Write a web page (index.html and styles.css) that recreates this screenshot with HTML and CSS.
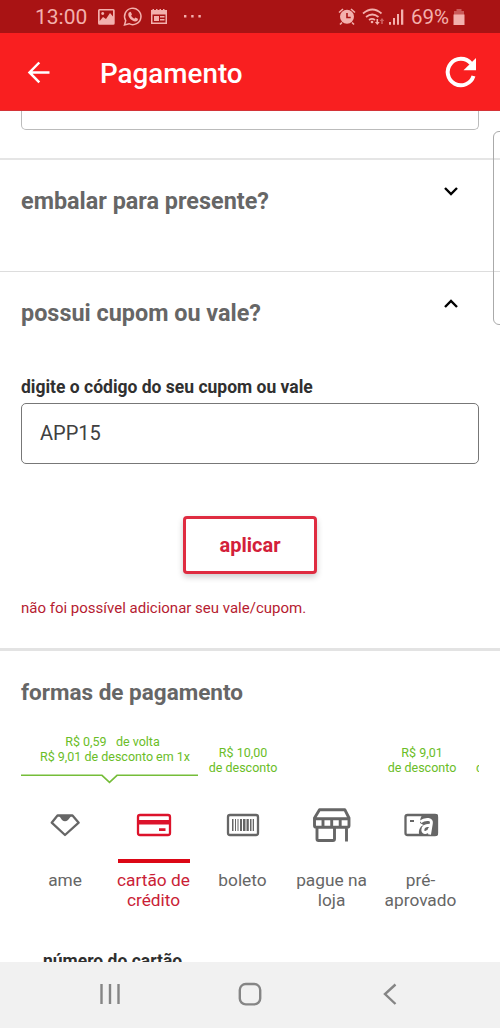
FILE: index.html
```html
<!DOCTYPE html>
<html lang="pt-BR">
<head>
<meta charset="utf-8">
<title>Pagamento</title>
<link rel="stylesheet" href="styles.css">
</head>
<body>
<div class="screen">
  <div class="status">
    <span class="clock">13:00</span>
    <svg class="status-left" width="106" height="22" viewBox="97 6 106 22">
      <path fill="currentColor" fill-rule="evenodd" d="M99.500 9H113.200Q114.700 9 114.700 10.500V23.200Q114.700 24.700 113.200 24.700H99.500Q98 24.700 98 23.200V10.500Q98 9 99.500 9ZM99.700 10.500V21L103 17L106 19L110 13L113 16.500V10.500ZM102.700 12a1.500 1.500 0 1 0 .01 0Z"/>
      <path fill="none" stroke="currentColor" stroke-width="1.500" d="M124.500 25 125.700 20.600A8.200 8.200 0 1 1 129 23.700Z"/>
      <path fill="currentColor" d="M129.500 12.200q1-.8 1.600.2l.8 1.900q0 .7-.8 1.300c.6 1.500 1.600 2.400 3.200 3.100l1.100-1.200 2.500 1.200c.4 1.600-1 2.700-2.600 2.700-3.800-.6-7-4-7-7 0-1 .5-1.800 1.200-2.200Z"/>
      <path fill="currentColor" fill-rule="evenodd" d="M151 10h1.500V9h1.500v1h2V9h1.500v1h2V9h1.500v1h2V9h1.500v1H167v14h-16ZM152.500 14.500v8h13v-8ZM154 16h5v5h-5Zm6 0h4.500v1.500H160Zm0 3h4.500v1.500H160Z"/>
      <path fill="currentColor" d="M184 15h2.400v2.400H184Zm7.200 0h2.400v2.400h-2.400Zm7.200 0h2.400v2.400h-2.400Z"/>
    </svg>
    <svg class="status-right" width="68" height="22" viewBox="337 6 68 22">
      <circle cx="347" cy="16.800" r="7" fill="currentColor"/>
      <path fill="none" stroke="#a91314" stroke-width="1.600" d="M347 13v4.500h3.700"/>
      <path fill="none" stroke="currentColor" stroke-width="1.600" d="M339 12.500l4-3.500M355 12.500 351 9M342 22.500l-2 2M352 22.500l2 2"/>
      <path fill="none" stroke="currentColor" stroke-width="1.700" d="M363 13.500q9.500-8 18.500 0M366 17q6.300-5 12.500 0M369 20q3-2.200 6 0"/>
      <circle cx="372" cy="22" r="1.300" fill="currentColor"/>
      <path fill="currentColor" d="M376.500 19h1.600v3h1.600l-2.400 3-2.400-3h1.600Z"/>
      <path fill="currentColor" opacity=".5" d="m382 18 2.300 3h-1.500v3h-1.600v-3h-1.500Z"/>
      <path fill="currentColor" d="M389 22h2v2.700h-2Zm4-4h2v6.700h-2Zm4-4h2v10.700h-2Zm4-4.500h2.300v15.200H401Z"/>
    </svg>
    <span class="percent">69%</span>
    <svg class="battery" width="12" height="18" viewBox="0 0 12 18"><path fill="currentColor" opacity=".45" d="M3.500 1h5v2H11v4H1V3h2.500Z"/><path fill="currentColor" d="M.5 6.500h11V17H.5Z"/></svg>
  </div>
  <header class="appbar">
    <svg class="back" width="24" height="24" viewBox="0 0 24 24"><path d="M23.500 12.500H3.500M13.300 2.500 3.500 12.500l9.800 9.800"/></svg>
    <h1>Pagamento</h1>
    <svg class="reload" width="34" height="34" viewBox="444 55 34 34"><path class="arc" d="M471 63.500A13.200 13.200 0 1 0 473.500 76"/><path class="tip" d="M476 58v12.300h-12.500Z"/></svg>
  </header>
  <main class="content">
    <div class="field-end"></div>
    <section class="fold gift"><h2>embalar para presente?</h2><svg width="16" height="12" viewBox="0 0 16 12"><path d="m2 3 6 6 6-6"/></svg></section>
    <section class="fold coupon-head"><h2>possui cupom ou vale?</h2><svg width="16" height="12" viewBox="0 0 16 12"><path d="m2 9 6-6 6 6"/></svg></section>
    <section class="coupon">
      <label>digite o código do seu cupom ou vale</label>
      <div class="input">APP15</div>
      <button>aplicar</button>
      <p class="error">não foi possível adicionar seu vale/cupom.</p>
    </section>
    <section class="payment">
      <h2>formas de pagamento</h2>
      <div class="offers">
        <div class="offer first"><span class="cashback">R$ 0,59 &nbsp; de volta</span><br>R$ 9,01 de desconto em 1x</div>
        <div class="offer">R$ 10,00<br>de desconto</div>
        <div class="offer"></div>
        <div class="offer">R$ 9,01<br>de desconto</div>
        <div class="offer next"><br>de desconto</div>
      </div>
      <svg class="pointer" width="177" height="12" viewBox="0 0 177 12"><path d="M0 2.300h81l7.500 7 7.500-7h81"/></svg>
      <div class="methods">
        <div class="method"><svg width="44" height="40" viewBox="0 0 44 40"><path class="line" d="M14.500 10.500h15l6.200 7.200L22 30 8.700 17.700Z"/><path class="solid" d="M15.500 10h13.500l-4 5q-3 2.500-6 0Z"/></svg><i></i><span>ame</span></div>
        <div class="method active"><svg width="44" height="40" viewBox="0 0 44 40"><rect class="line" x="6" y="10" width="32" height="20" rx="2"/><path class="solid" d="M6 15h32v4.500H6Zm21 8.300h6.500v2.700H27Z"/></svg><i></i><span>cartão de crédito</span></div>
        <div class="method"><svg width="44" height="40" viewBox="0 0 44 40"><rect class="line" x="7" y="10" width="30" height="20" rx="2"/><path class="solid" d="M11 14h1.500v12H11Zm3 0h1v12h-1Zm2.500 0h1v12h-1Zm2.500 0h2v12h-2Zm3 0h2.500v12H22Zm3.500 0h2.300v12h-2.300Zm3.500 0h1.500v12H29Zm2.700 0h1.300v12h-1.300Z"/></svg><i></i><span>boleto</span></div>
        <div class="method"><svg width="44" height="40" viewBox="0 0 44 40"><path class="line thick" d="M9.500 4.700h25.300L39 13v7.500q0 1.800-2 1.800H6.500q-2 0-2-1.800V13ZM4.500 13.800H39M13 14v8m8.700-8v8m8.500-8v8M7 22.500V34q0 1.500 1.500 1.500H23q1.500 0 1.500-1.500V22.500M36.500 22.500v14"/></svg><i></i><span>pague na loja</span></div>
        <div class="method"><svg width="44" height="40" viewBox="0 0 44 40"><rect class="line" x="6.500" y="10" width="31.500" height="20" rx="2"/><path class="solid" d="M24 9h13q2 0 2 2v18q0 2-2 2H21q-2-3-.5-7 1-3 4-4l-3.500-2q0-6 3-9Z"/><path class="letter" d="M21.500 16.800q3.500-2.800 8-2.300 3.500.5 2.800 4L30.500 29.500M31.500 20.300q-7.500-.3-7.700 4.700.2 3 3.200 2.300 3.500-1 4-4.500"/><path class="solid" d="M11 15h4v2h-4Z"/></svg><i></i><span>pré-aprovado</span></div>
      </div>
      <div class="card-label">número do cartão</div>
    </section>
    <div class="side-panel"></div>
  </main>
  <nav class="navbar">
    <svg width="24" height="24" viewBox="0 0 24 24"><path d="M3.500 2v20M12 2v20M20.500 2v20"/></svg>
    <svg width="24" height="24" viewBox="0 0 24 24"><rect x="1.800" y="2" width="20.400" height="20.400" rx="6"/></svg>
    <svg width="24" height="24" viewBox="0 0 24 24"><path d="M17.500 2.500 7 12l10.500 10"/></svg>
  </nav>
</div>
</body>
</html>
```
FILE: styles.css
```css
* { box-sizing: border-box; margin: 0; }
body { background: #fff; font-family: Roboto, "Liberation Sans", sans-serif; }
svg { display: block; flex: none; }
.screen { width: 500px; height: 1028px; display: flex; flex-direction: column; overflow: hidden; }
.status { height: 33px; flex: none; display: flex; align-items: center; background: #a91314; color: #f3b0ad; padding: 1px 33px 0 35px; font-size: 21px; }
.clock { width: 62px; }
.status-right { margin-left: 134px; }
.percent { margin-left: 6px; width: 42px; font-size: 20.500px; }
.appbar { height: 78px; flex: none; display: flex; align-items: center; background: #f91f20; color: #fff; padding: 0 22px 0 26px; border-bottom: 1px solid #d43337; }
.appbar h1 { font-size: 27.800px; font-weight: 500; line-height: 32px; margin: 4px 0 0 50px; }
.back path { fill: none; stroke: #fff; stroke-width: 2.500; }
.reload { margin-left: auto; }
.reload .arc { fill: none; stroke: #fff; stroke-width: 4; }
.reload .tip { fill: #fff; }
.content { position: relative; height: 851px; flex: none; overflow: hidden; }
.field-end { height: 19px; margin: 0 21px 28px; border: 1px solid #bbb; border-top: 0; border-radius: 0 0 5px 5px; }
h2 { font-size: 23.400px; line-height: 28px; font-weight: 700; color: #666; }
.fold { height: 112px; border-top: 1px solid #ddd; padding: 27px 41px 0 21px; display: flex; justify-content: space-between; }
.gift { height: 113px; border-top: 2px solid #e5e5e5; }
.coupon-head { height: 100px; }
.fold svg { margin-top: -1px; }
.gift svg { margin-top: -2px; }
.fold svg path { fill: none; stroke: #000; stroke-width: 2.400; }
.coupon { padding: 4px 21px 0; height: 277px; display: flex; flex-direction: column; }
.coupon label { font-size: 17.500px; line-height: 24px; font-weight: 700; color: #303030; white-space: nowrap; }
.input { height: 61px; margin-top: 4px; border: 1px solid #777; border-radius: 5px; padding: 0 18px; font-size: 20px; line-height: 59px; color: #404040; }
.coupon button { align-self: center; width: 134px; height: 58px; margin-top: 52px; border: 3px solid #df2c41; border-radius: 4px; background: #fff; box-shadow: 0 3px 6px #0003; color: #d32039; font: 700 20px Roboto, sans-serif; }
.error { margin-top: 24px; font-size: 15px; line-height: 20px; color: #b61c31; }
.payment { border-top: 3px solid #e3e3e3; padding: 27px 21px 0; }
.payment h2 { font-size: 22.500px; }
.offers { display: flex; margin-top: 28px; height: 39px; overflow: hidden; color: #6abd27; font-size: 12.500px; line-height: 15px; text-align: center; }
.offer { flex: none; width: 89px; padding-top: 11px; white-space: nowrap; }
.offer:nth-child(2) { width: 90px; }
.offer.first { width: 177px; padding: 0 0 0 11px; }
.offer:nth-child(4) { width: 90px; }
.offer.first { margin-right: -1px; }
.cashback { margin-right: 5px; }
.offer.next { width: 80px; padding-left: 0; text-align: left; }
.pointer path { fill: none; stroke: #75bd39; stroke-width: 1.600; }
.methods { display: flex; margin: 20px 0 0 -1px; }
.method { width: 89px; flex: none; display: flex; flex-direction: column; align-items: center; color: #666; text-align: center; font-size: 17.300px; line-height: 20px; }
.method .line { fill: none; stroke: currentColor; stroke-width: 2.300; stroke-linejoin: round; }
.method .line.thick { stroke-width: 2.900; }
.method .solid { fill: currentColor; }
.method .letter { fill: none; stroke: #fff; stroke-width: 3; }
.method i { width: 72px; height: 4px; margin: 14px 0 7px; }
.method span { width: 82px; }
.method:first-child span { padding-left: 1px; }
.method.active { color: #ca1e36; }
.method.active svg { color: #dc132b; }
.method.active i { background: #dc0716; }
.card-label { margin: 41px 0 0 22px; font-size: 17.500px; line-height: 20px; font-weight: 700; color: #303030; }
.offer:nth-child(4) { margin-right: 9px; }
.offer:nth-child(2) { margin-left: 1px; }
.side-panel { position: absolute; left: 493px; top: 20px; width: 20px; height: 194px; border: 1px solid #aaa; border-radius: 6px; }
.navbar { height: 66px; flex: none; background: #f1f1f1; display: flex; justify-content: space-between; align-items: center; padding: 0 98px 2px 98px; }
.navbar path, .navbar rect { fill: none; stroke: #858585; stroke-width: 2.400; }
```
